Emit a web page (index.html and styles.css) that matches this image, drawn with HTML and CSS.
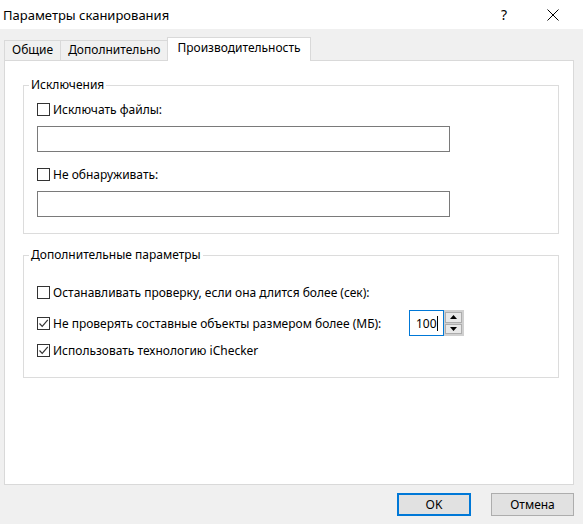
FILE: index.html
```html
<!DOCTYPE html>
<html lang="ru">
<head>
    <meta charset="UTF-8">
    <meta name="viewport" content="width=device-width, initial-scale=1.0">
    <title>Параметры сканирования</title>
    <link rel="stylesheet" href="styles.css">
</head>
<body>
    <div class="titlebar">
        <span class="title">Параметры сканирования</span>
        <span class="help">?</span>
        <span class="close">
            <svg width="12" height="12" viewBox="0 0 12 12"><path d="M0.5 0.5 L11.5 11.5 M11.5 0.5 L0.5 11.5" stroke="#000" stroke-width="1" fill="none"/></svg>
        </span>
    </div>

    <div class="tabs">
        <div class="tab">Общие</div>
        <div class="tab">Дополнительно</div>
        <div class="tab active">Производительность</div>
    </div>

    <div class="panel">
        <fieldset class="group group-excl">
            <legend>Исключения</legend>
            <label class="check-row">
                <span class="checkbox"></span>
                <span>Исключать файлы:</span>
            </label>
            <div class="text-input"></div>
            <label class="check-row second">
                <span class="checkbox"></span>
                <span>Не обнаруживать:</span>
            </label>
            <div class="text-input"></div>
        </fieldset>

        <fieldset class="group group-extra">
            <legend>Дополнительные параметры</legend>
            <label class="check-row">
                <span class="checkbox"></span>
                <span>Останавливать проверку, если она длится более (сек):</span>
            </label>
            <div class="check-row spin-row">
                <span class="checkbox checked">
                    <svg width="11" height="11" viewBox="0 0 11 11"><path d="M1.5 5.5 L4.2 8.3 L9.8 1.8" stroke="#333" stroke-width="1.2" fill="none"/></svg>
                </span>
                <span class="opt-label">Не проверять составные объекты размером более (МБ):</span>
                <div class="spinbox">
                    <div class="spin-value">100<span class="caret"></span></div>
                    <div class="spin-buttons">
                        <span class="spin-btn"><svg width="7" height="4" viewBox="0 0 7 4"><path d="M0 4 L3.5 0 L7 4 Z" fill="#000"/></svg></span>
                        <span class="spin-btn"><svg width="7" height="4" viewBox="0 0 7 4"><path d="M0 0 L7 0 L3.5 4 Z" fill="#000"/></svg></span>
                    </div>
                </div>
            </div>
            <label class="check-row third">
                <span class="checkbox checked">
                    <svg width="11" height="11" viewBox="0 0 11 11"><path d="M1.5 5.5 L4.2 8.3 L9.8 1.8" stroke="#333" stroke-width="1.2" fill="none"/></svg>
                </span>
                <span>Использовать технологию iChecker</span>
            </label>
        </fieldset>
    </div>

    <div class="buttons">
        <button class="btn default">OK</button>
        <button class="btn">Отмена</button>
    </div>
</body>
</html>
```

FILE: styles.css
```css
* {
    box-sizing: border-box;
    margin: 0;
    padding: 0;
}
body {
    width: 583px;
    height: 524px;
    background-color: #f0f0f0;
    color: #000;
    font-family: "Noto Sans", "Open Sans", sans-serif;
    font-size: 12px;
    overflow: hidden;
}
.titlebar {
    height: 29px;
    background-color: #fff;
    display: flex;
    align-items: center;
    padding-left: 3px;
}
.title {
    font-size: 13px;
    flex: 1;
}
.help {
    font-size: 14px;
    width: 46px;
}
.close {
    width: 36px;
    display: flex;
    align-items: center;
}
.tabs {
    display: flex;
    align-items: flex-end;
    height: 31px;
    padding-left: 4px;
}
.tab {
    height: 20px;
    line-height: 18px;
    padding: 0 7px 0 7px;
    border: 1px solid #d9d9d9;
    border-bottom: none;
    margin-right: -1px;
}
.tab.active {
    height: 24px;
    line-height: 20px;
    padding: 0 9px;
    background-color: #fff;
    margin-bottom: -1px;
    position: relative;
    z-index: 1;
}
.panel {
    height: 425px;
    margin: 0 9px 0 4px;
    background-color: #fff;
    border: 1px solid #d9d9d9;
    padding: 16px 14px 0 18px;
}
.group {
    border: 1px solid #dcdcdc;
    padding: 8px 13px 16px 13px;
}
.group legend {
    padding: 0 2px;
    margin-left: -8px;
    line-height: 16px;
}
.group-extra {
    margin-top: 13px;
    padding-top: 21px;
    padding-bottom: 19px;
}
.check-row {
    display: flex;
    align-items: center;
    gap: 3px;
    height: 16px;
}
.check-row.second {
    margin-top: 14px;
}
.checkbox {
    width: 13px;
    height: 13px;
    border: 1px solid #333;
    background-color: #fff;
    display: flex;
    align-items: center;
    justify-content: center;
    flex: 0 0 13px;
}
.text-input {
    width: 413px;
    height: 26px;
    margin-top: 9px;
    border: 1px solid #7a7a7a;
    background-color: #fff;
}
.spin-row {
    height: 26px;
    margin-top: 10px;
}
.opt-label {
    flex: 0 0 353px;
}
.check-row.third {
    margin-top: 6px;
}
.spinbox {
    display: flex;
    height: 26px;
}
.spin-value {
    width: 35px;
    border: 1px solid #0078d7;
    display: flex;
    align-items: center;
    padding-left: 6px;
}
.caret {
    display: inline-block;
    width: 1px;
    height: 15px;
    background-color: #000;
}
.spin-buttons {
    width: 20px;
    display: flex;
    flex-direction: column;
    gap: 1px;
    border: 1px solid #d0d0d0;
    border-left: none;
    background-color: #d0d0d0;
    padding: 1px;
}
.spin-btn {
    flex: 1;
    background-color: #e8e8e8;
    border: 1px solid #adadad;
    display: flex;
    align-items: center;
    justify-content: center;
}
.buttons {
    display: flex;
    justify-content: flex-end;
    gap: 20px;
    padding: 8px 9px 0 0;
}
.btn {
    height: 23px;
    width: 83px;
    background-color: #e1e1e1;
    border: 1px solid #adadad;
    font-family: inherit;
    font-size: 12px;
}
.btn.default {
    width: 74px;
    border: 2px solid #0078d7;
}
```
